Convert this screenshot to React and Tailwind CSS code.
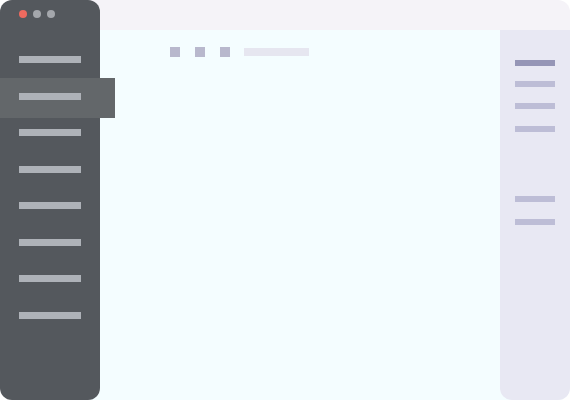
export default function App() {
  const items = [0, 1, 2, 3, 4, 5, 6, 7];
  const active = 1;

  return (
    <div className="flex h-[400px] w-[570px] bg-white">
      {/* sidebar */}
      <aside className="relative z-10 flex h-full w-[100px] shrink-0 flex-col rounded-xl bg-[#54585d]">
        <div className="flex gap-[6px] pl-[19px] pt-[10px]">
          <span className="h-2 w-2 rounded-full bg-[#ee6a5f]" />
          <span className="h-2 w-2 rounded-full bg-[#a4a7ac]" />
          <span className="h-2 w-2 rounded-full bg-[#a4a7ac]" />
        </div>
        <nav className="mt-[38px] flex flex-col gap-[29.5px]">
          {items.map((i) =>
            i === active ? (
              <div
                key={i}
                className="-mb-[18px] -mt-[15px] w-[115px] bg-[#63676a] pb-[18px] pt-[15px]"
              >
                <div className="ml-[19px] h-[7px] w-[62px] bg-[#aeb2b8]" />
              </div>
            ) : (
              <div key={i} className="ml-[19px] h-[7px] w-[62px] bg-[#aeb2b8]" />
            )
          )}
        </nav>
      </aside>

      {/* content */}
      <div className="-ml-3 flex flex-1 flex-col">
        <header className="h-[30px] shrink-0 rounded-tr-xl bg-[#f5f3f8]" />
        <div className="flex flex-1 rounded-br-xl bg-[#f4fdff]">
          <main className="flex-1 pl-[82px] pt-[17px]">
            <div className="flex items-center">
              <span className="h-[10px] w-[10px] bg-[#b8b8cd]" />
              <span className="ml-[15px] h-[10px] w-[10px] bg-[#b8b8cd]" />
              <span className="ml-[15px] h-[10px] w-[10px] bg-[#b8b8cd]" />
              <span className="ml-[14px] h-2 w-[65px] bg-[#e6e6f0]" />
            </div>
          </main>
          <div className="flex w-[70px] shrink-0 flex-col rounded-b-xl bg-[#e8e8f3] pl-[15px] pt-[30px]">
            <span className="h-[6px] w-10 bg-[#9595b6]" />
            <span className="mt-[15px] h-[6px] w-10 bg-[#bdbdd6]" />
            <span className="mt-[16px] h-[6px] w-10 bg-[#bdbdd6]" />
            <span className="mt-[17px] h-[6px] w-10 bg-[#bdbdd6]" />
            <span className="mt-[64px] h-[6px] w-10 bg-[#bdbdd6]" />
            <span className="mt-[17px] h-[6px] w-10 bg-[#bdbdd6]" />
          </div>
        </div>
      </div>
    </div>
  );
}
